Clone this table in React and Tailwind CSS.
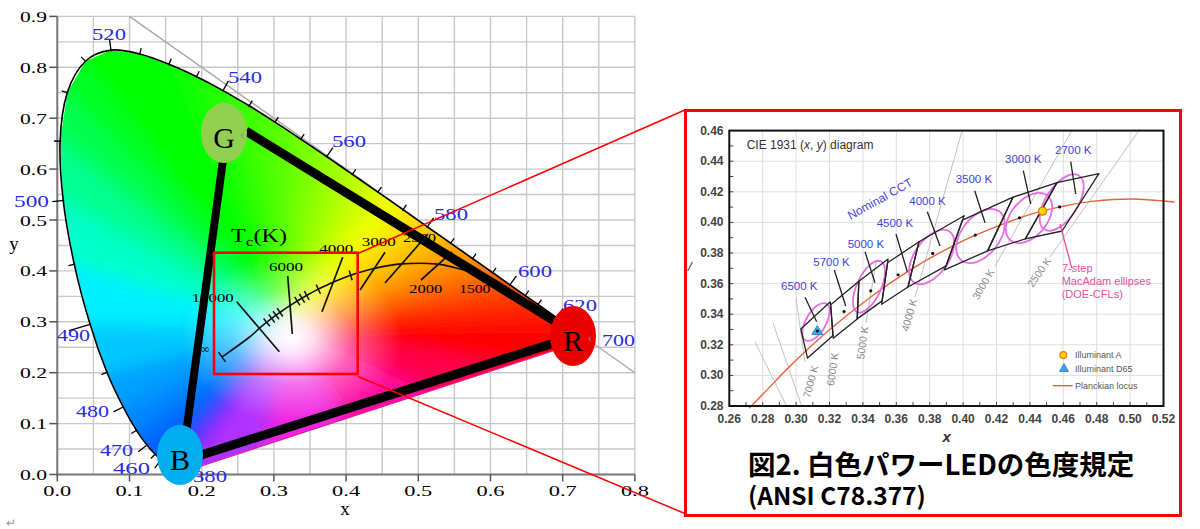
import React from "react";

// ---------- left chart: CIE 1931 xy (source picture is stretched ~1.42x horizontally)
const X = (x) => 57.3 + x * 722;
const Y = (y) => 474.5 - y * 509;

const SERIF = "'Liberation Serif', 'DejaVu Serif', serif";
const SANS = "'Liberation Sans', Arial, sans-serif";
const BLUE = "#2a2ae6";

// x, y, colour, wavelength
const LOCUS = [
  [0.1741, 0.005, "#7a00ff", 380],
  [0.1714, 0.0051, "#6a10ff", 420],
  [0.1644, 0.0109, "#4a30ff", 440],
  [0.1566, 0.0177, "#2a40ff", 450],
  [0.144, 0.0297, "#0a55ff", 460],
  [0.1355, 0.0399, "#0060ff", 465],
  [0.1241, 0.0578, "#0070ff", 470],
  [0.1096, 0.0868, "#0088ff", 475],
  [0.0913, 0.1327, "#00a0ff", 480],
  [0.0687, 0.2007, "#00c8ff", 485],
  [0.0454, 0.295, "#00f0ff", 490],
  [0.0235, 0.4127, "#00ffc8", 495],
  [0.0082, 0.5384, "#00ff90", 500],
  [0.0039, 0.6548, "#00ff50", 505],
  [0.0139, 0.7502, "#00ff20", 510],
  [0.0389, 0.812, "#00ff00", 515],
  [0.0743, 0.8338, "#00ff00", 520],
  [0.1142, 0.8262, "#00ff00", 525],
  [0.1547, 0.8059, "#10ff00", 530],
  [0.1929, 0.7816, "#20ff00", 535],
  [0.2296, 0.7543, "#30ff00", 540],
  [0.2658, 0.7243, "#48ff00", 545],
  [0.3016, 0.6923, "#60ff00", 550],
  [0.3373, 0.6589, "#80ff00", 555],
  [0.3731, 0.6245, "#a0ff00", 560],
  [0.4087, 0.5896, "#c8ff00", 565],
  [0.4441, 0.5547, "#eeff00", 570],
  [0.4788, 0.5202, "#ffe000", 575],
  [0.5125, 0.4866, "#ffc000", 580],
  [0.5448, 0.4544, "#ffa000", 585],
  [0.5752, 0.4242, "#ff8000", 590],
  [0.6029, 0.3965, "#ff6000", 595],
  [0.627, 0.3725, "#ff4800", 600],
  [0.6482, 0.3514, "#ff3000", 605],
  [0.6658, 0.334, "#ff2000", 610],
  [0.6915, 0.3083, "#ff1000", 620],
  [0.7079, 0.292, "#ff0800", 630],
  [0.719, 0.2809, "#ff0000", 640],
  [0.7347, 0.2653, "#ff0000", 700],
];
const LABELED = [460, 470, 480, 490, 500, 520, 540, 560, 580, 600, 620];

const PURPLE = [
  [0.2, "#ff0050"],
  [0.4, "#ff10a0"],
  [0.6, "#f020e0"],
  [0.8, "#b030ff"],
];

const W = [X(0.32), Y(0.29)];
const CORE = [292, 338];

const WAVE_LABELS = [
  ["520", 92, 34.3, 34],
  ["540", 228, 77, 34],
  ["560", 332, 141, 34],
  ["580", 434, 214, 34],
  ["600", 518, 271.7, 34],
  ["620", 563, 305, 34],
  ["700", 602, 340.7, 33],
  ["500", 14, 201.7, 35],
  ["490", 57, 335, 33],
  ["480", 76, 411.7, 33],
  ["470", 100, 450.7, 33],
  ["460", 113, 468.3, 37],
  ["380", 193, 476, 34],
];

const TC_LABELS = [
  ["10000", 191.7, 297.7, 42],
  ["6000", 269, 266.7, 34],
  ["4000", 319.3, 248.3, 34],
  ["3000", 361.7, 241.7, 34],
  ["2500", 403, 237.3, 33],
  ["2000", 409.3, 288.3, 33],
  ["1500", 459.3, 288.3, 31],
];

const ISOTHERMS = [
  [236.7, 301.7, 279.3, 351.7],
  [287.7, 276, 292.3, 334],
  [342.7, 257.3, 322, 311.7],
  [385, 252.3, 360, 290],
  [428, 234, 385, 283],
  [452, 252, 421, 280],
];

const PLANCK_L = [
  [222, 357],
  [X(0.2637), Y(0.2671)],
  [X(0.2807), Y(0.2884)],
  [X(0.2952), Y(0.3048)],
  [X(0.3064), Y(0.3166)],
  [X(0.3221), Y(0.3318)],
  [X(0.3451), Y(0.3516)],
  [X(0.3608), Y(0.3636)],
  [X(0.3805), Y(0.3768)],
  [X(0.4053), Y(0.3907)],
  [X(0.4369), Y(0.4041)],
  [X(0.477), Y(0.4137)],
  [X(0.5267), Y(0.4133)],
  [X(0.564), Y(0.4014)],
  [X(0.5857), Y(0.3931)],
];
const SMALL_TICKS = [266.7, 271.7, 276, 280, 297.3, 302, 306.7, 318.3, 350.7];

const f = (n) => n.toFixed(1);

function smoothPath(pts) {
  let d = `M${f(pts[0][0])},${f(pts[0][1])}`;
  for (let i = 0; i < pts.length - 1; i++) {
    const p0 = pts[i - 1] || pts[i];
    const p1 = pts[i];
    const p2 = pts[i + 1];
    const p3 = pts[i + 2] || p2;
    const c1 = [p1[0] + (p2[0] - p0[0]) / 6, p1[1] + (p2[1] - p0[1]) / 6];
    const c2 = [p2[0] - (p3[0] - p1[0]) / 6, p2[1] - (p3[1] - p1[1]) / 6];
    d += ` C${f(c1[0])},${f(c1[1])} ${f(c2[0])},${f(c2[1])} ${f(p2[0])},${f(p2[1])}`;
  }
  return d;
}

function onCurve(pts, x) {
  for (let i = 0; i < pts.length - 1; i++) {
    const [ax, ay] = pts[i];
    const [bx, by] = pts[i + 1];
    if (x >= ax && x <= bx) {
      const t = (x - ax) / (bx - ax);
      return { p: [x, ay + (by - ay) * t], d: [bx - ax, by - ay] };
    }
  }
  return null;
}

function Stretch({ x, y, w, size, fill = "#000", anchor = "start", children }) {
  return (
    <text
      x={x}
      y={y}
      fontSize={size}
      fill={fill}
      textAnchor={anchor}
      dominantBaseline="central"
      textLength={w}
      lengthAdjust="spacingAndGlyphs"
      fontFamily={SERIF}
    >
      {children}
    </text>
  );
}

function CieChart() {
  const locusPx = LOCUS.map(([x, y, c, nm]) => ({ p: [X(x), Y(y)], c, nm }));
  const a = locusPx[locusPx.length - 1].p;
  const b = locusPx[0].p;
  const purplePx = PURPLE.map(([t, c]) => ({ p: [a[0] + (b[0] - a[0]) * t, a[1] + (b[1] - a[1]) * t], c }));
  const ring = [...locusPx, ...purplePx];
  const ringPts = ring.map((r) => `${f(r.p[0])},${f(r.p[1])}`).join(" ");
  const far = (p) => [W[0] + (p[0] - W[0]) * 1.6, W[1] + (p[1] - W[1]) * 1.6];

  const ticks = [];
  for (let i = 3; i < locusPx.length - 1; i++) {
    const p = locusPx[i].p;
    const t = [locusPx[i + 1].p[0] - locusPx[i - 1].p[0], locusPx[i + 1].p[1] - locusPx[i - 1].p[1]];
    const len = Math.hypot(t[0], t[1]);
    let n = [t[1] / len, -t[0] / len];
    if (n[0] * (p[0] - W[0]) + n[1] * (p[1] - W[1]) < 0) n = [-n[0], -n[1]];
    const nm = locusPx[i].nm;
    const L = nm === 490 ? 22 : LABELED.includes(nm) ? 11 : 6;
    ticks.push([p[0] - n[0], p[1] - n[1], p[0] + n[0] * L, p[1] + n[1] * L]);
  }

  const planckTicks = SMALL_TICKS.map((x) => {
    const r = onCurve(PLANCK_L, x);
    const len = Math.hypot(r.d[0], r.d[1]);
    const n = [-r.d[1] / len, r.d[0] / len];
    return [r.p[0] - n[0] * 5, r.p[1] - n[1] * 5, r.p[0] + n[0] * 5, r.p[1] + n[1] * 5];
  });
  const e0 = PLANCK_L[0];
  const e1 = PLANCK_L[1];
  const el = Math.hypot(e1[0] - e0[0], e1[1] - e0[1]);
  const en = [-(e1[1] - e0[1]) / el, (e1[0] - e0[0]) / el];

  const gridX = [];
  for (let v = 0; v <= 0.8001; v += 0.05) gridX.push(X(v));
  const gridY = [];
  for (let v = 0; v <= 0.9001; v += 0.05) gridY.push(Y(v));

  return (
    <svg width="684" height="529" viewBox="0 0 684 529" className="block shrink-0">
      <defs>
        <clipPath id="locusClip">
          <polygon points={ringPts} />
        </clipPath>
        <filter id="soft" x="-30%" y="-30%" width="160%" height="160%">
          <feGaussianBlur stdDeviation="9" />
        </filter>
        <radialGradient id="whiteCore" cx={CORE[0]} cy={CORE[1]} r="85" gradientUnits="userSpaceOnUse" gradientTransform={`translate(${CORE[0]} ${CORE[1]}) scale(1.3 1) translate(${-CORE[0]} ${-CORE[1]})`}>
          <stop offset="0" stopColor="#ffffff" stopOpacity="1" />
          <stop offset="0.2" stopColor="#ffffff" stopOpacity="0.85" />
          <stop offset="0.55" stopColor="#ffffff" stopOpacity="0.35" />
          <stop offset="1" stopColor="#ffffff" stopOpacity="0" />
        </radialGradient>
      </defs>

      {/* grid */}
      {gridX.map((x, i) => (
        <line key={`gx${i}`} x1={x} y1={Y(0.9)} x2={x} y2={Y(0)} stroke="#c8c8c8" strokeWidth="1.4" />
      ))}
      {gridY.map((y, i) => (
        <line key={`gy${i}`} x1={X(0)} y1={y} x2={X(0.8)} y2={y} stroke="#c8c8c8" strokeWidth="1.4" />
      ))}
      <line x1={X(0)} y1={Y(0.9)} x2={X(0)} y2={Y(0) + 1} stroke="#7a7a7a" strokeWidth="2" />
      <line x1={X(0) - 1} y1={Y(0)} x2={X(0.8)} y2={Y(0)} stroke="#7a7a7a" strokeWidth="2" />
      {[0, 1, 2, 3, 4, 5, 6, 7, 8, 9].map((k) => (
        <line key={`ty${k}`} x1={X(0) - 8} y1={Y(k / 10)} x2={X(0)} y2={Y(k / 10)} stroke="#555" strokeWidth="1.5" />
      ))}
      {[0, 1, 2, 3, 4, 5, 6, 7, 8].map((k) => (
        <line key={`tx${k}`} x1={X(k / 10)} y1={Y(0)} x2={X(k / 10)} y2={Y(0) + 7} stroke="#555" strokeWidth="1.5" />
      ))}
      {[0, 1, 2, 3, 4, 5, 6, 7, 8, 9].map((k) => (
        <Stretch key={`ly${k}`} x={47} y={Y(k / 10)} w={27} size={15.5} anchor="end">
          {(k / 10).toFixed(1)}
        </Stretch>
      ))}
      {[0, 1, 2, 3, 4, 5, 6, 7, 8].map((k) => (
        <Stretch key={`lx${k}`} x={X(k / 10)} y={490} w={28} size={15.5} anchor="middle">
          {(k / 10).toFixed(1)}
        </Stretch>
      ))}
      <text x="14" y="243" fontSize="19" fontFamily={SERIF} textAnchor="middle" dominantBaseline="central">y</text>
      <text x="345" y="508" fontSize="19" fontFamily={SERIF} textAnchor="middle" dominantBaseline="central">x</text>
      <line x1={X(0.1)} y1={Y(0.9)} x2={X(0.8)} y2={Y(0.2)} stroke="#a8a8a8" strokeWidth="1.4" />

      {/* colour fill: blurred hue fan clipped to the locus, white core on top */}
      <polygon points={ringPts} fill="#ffffff" />
      <g clipPath="url(#locusClip)">
        <g filter="url(#soft)">
          {ring.map((pt, i) => {
            const q = ring[(i + 1) % ring.length];
            const p1 = far(pt.p);
            const p2 = far(q.p);
            return (
              <polygon
                key={`tri${i}`}
                points={`${f(W[0])},${f(W[1])} ${f(p1[0])},${f(p1[1])} ${f(p2[0])},${f(p2[1])}`}
                fill={pt.c}
                stroke={pt.c}
                strokeWidth="1"
                strokeLinejoin="round"
              />
            );
          })}
        </g>
        <ellipse cx={CORE[0]} cy={CORE[1]} rx="112" ry="86" fill="url(#whiteCore)" />
      </g>
      <line x1={a[0]} y1={a[1]} x2={b[0]} y2={b[1]} stroke="#e0209a" strokeWidth="1.2" />
      <path d={smoothPath(locusPx.map((l) => l.p))} fill="none" stroke="#000" strokeWidth="1.6" />
      {ticks.map(([x1, y1, x2, y2], i) => (
        <line key={`lt${i}`} x1={x1} y1={y1} x2={x2} y2={y2} stroke="#000" strokeWidth="1.3" />
      ))}

      {WAVE_LABELS.map(([t, x, y, w]) => (
        <Stretch key={t} x={x} y={y} w={w} size={16} fill={BLUE}>
          {t}
        </Stretch>
      ))}

      {/* Planckian locus */}
      <path d={smoothPath(PLANCK_L)} fill="none" stroke="#111" strokeWidth="1.6" />
      {ISOTHERMS.map(([x1, y1, x2, y2], i) => (
        <line key={`iso${i}`} x1={x1} y1={y1} x2={x2} y2={y2} stroke="#111" strokeWidth="1.7" />
      ))}
      {planckTicks.map(([x1, y1, x2, y2], i) => (
        <line key={`pt${i}`} x1={x1} y1={y1} x2={x2} y2={y2} stroke="#111" strokeWidth="1.5" />
      ))}
      <line x1={e0[0] - en[0] * 6} y1={e0[1] - en[1] * 6} x2={e0[0] + en[0] * 6} y2={e0[1] + en[1] * 6} stroke="#111" strokeWidth="1.5" />
      <text x="205" y="349" fontSize="12" fontFamily={SERIF} textAnchor="middle" dominantBaseline="central">∞</text>
      {TC_LABELS.map(([t, x, y, w]) => (
        <Stretch key={t} x={x} y={y} w={w} size={13.5}>
          {t}
        </Stretch>
      ))}
      <text x="231" y="242" fontSize="18" fontFamily={SERIF} textLength="56" lengthAdjust="spacingAndGlyphs">
        T<tspan fontSize="13" dy="4">c</tspan>
        <tspan dy="-4">(K)</tspan>
      </text>

      {/* gamut triangle */}
      <line x1="246" y1="131" x2="556" y2="322" stroke="#000" strokeWidth="9" />
      <line x1="198" y1="456" x2="554" y2="343" stroke="#000" strokeWidth="9" />
      <line x1="223" y1="160" x2="186.5" y2="430" stroke="#000" strokeWidth="8" />

      {/* zoom box and connectors */}
      <rect x="214" y="252.7" width="143.7" height="121.3" fill="none" stroke="#ff0000" strokeWidth="2.6" />
      <line x1="358" y1="253.5" x2="686" y2="109.5" stroke="#ff0000" strokeWidth="1.5" />
      <line x1="358" y1="376.5" x2="686" y2="514" stroke="#ff0000" strokeWidth="1.5" />

      {/* primaries */}
      <ellipse cx="224" cy="133" rx="23" ry="30" fill="#92d050" />
      <text x="224" y="148" fontSize="30" fontFamily={SERIF} textAnchor="middle">G</text>
      <text x="242" y="139" fontSize="11" fontFamily={SANS} fill="#888" textAnchor="middle">‹</text>
      <ellipse cx="180" cy="455" rx="23" ry="30" fill="#00aeef" />
      <text x="180" y="470" fontSize="30" fontFamily={SERIF} textAnchor="middle">B</text>
      <text x="197" y="461" fontSize="11" fontFamily={SANS} fill="#888" textAnchor="middle">‹</text>
      <ellipse cx="573" cy="336" rx="23" ry="30" fill="#ea0000" />
      <text x="573" y="351" fontSize="30" fontFamily={SERIF} textAnchor="middle">R</text>
      <text x="590" y="342" fontSize="11" fontFamily={SANS} fill="#999" textAnchor="middle">‹</text>

      <text x="6" y="527" fontSize="12" fontFamily={SANS} fill="#999">↵</text>
    </svg>
  );
}

// ---------- right chart: ANSI C78.377 quadrangles
const RX = (x) => 729.3 + ((x - 0.26) / 0.02) * 33.4;
const RY = (y) => 406 - ((y - 0.28) / 0.02) * 30.6;

const QUADS = [
  [[0.3205, 0.3481], [0.3028, 0.3304], [0.3068, 0.3113], [0.3221, 0.3261]],
  [[0.3376, 0.3616], [0.3207, 0.3462], [0.3222, 0.3243], [0.3366, 0.3369]],
  [[0.3551, 0.376], [0.3376, 0.3616], [0.3366, 0.3369], [0.3515, 0.3487]],
  [[0.3736, 0.3874], [0.3548, 0.3736], [0.3512, 0.3465], [0.367, 0.3578]],
  [[0.4006, 0.4044], [0.3736, 0.3874], [0.367, 0.3578], [0.3898, 0.3716]],
  [[0.4299, 0.4165], [0.3996, 0.4015], [0.3889, 0.369], [0.4147, 0.3814]],
  [[0.4562, 0.426], [0.4299, 0.4165], [0.4147, 0.3814], [0.4373, 0.3893]],
  [[0.4813, 0.4319], [0.4562, 0.426], [0.4373, 0.3893], [0.4593, 0.3944]],
];
const CENTERS = [
  [0.3123, 0.3282],
  [0.3287, 0.3417],
  [0.3447, 0.3553],
  [0.3611, 0.3658],
  [0.3818, 0.3797],
  [0.4073, 0.3917],
  [0.4338, 0.403],
  [0.4578, 0.4101],
];

// label, label x, label y, tick line
const NOMINAL = [
  ["6500 K", 781, 285.7, [805, 297.3, 816.7, 321.7]],
  ["5700 K", 813.3, 262.3, [834.3, 270, 845.7, 306]],
  ["5000 K", 847.7, 244, [865, 251.7, 875, 282.7]],
  ["4500 K", 876.7, 222.7, [896, 234, 907.3, 271.7]],
  ["4000 K", 909.3, 200.7, [927.3, 211.7, 940, 246]],
  ["3500 K", 955.7, 179.3, [974.7, 190.7, 985, 222.7]],
  ["3000 K", 1005, 159.3, [1023.3, 170.7, 1030.7, 204]],
  ["2700 K", 1055, 150, [1070.7, 161.7, 1075.7, 194]],
];

// cx, cy, a, b, angle
const MACADAM = [
  [816, 322, 21, 10, 60],
  [869, 286.7, 28, 12, 65],
  [931.7, 257, 31, 17, 55],
  [980.5, 236, 31, 19, 52],
  [1029, 218, 29, 18, 50],
  [1061.7, 202.5, 32, 16, 57],
];

const GRAY_LINES = [
  [755, 342, 787, 407],
  [773, 323, 802, 407],
  [796, 298, 805, 362],
  [866, 323, 876, 262],
  [915, 297, 962, 131],
  [995, 266, 1072, 130],
  [1050, 257, 1140, 129],
];
const GRAY_LABELS = [
  ["7000 K", 810.5, 381.5, -75],
  ["6000 K", 832.3, 369.3, -82],
  ["5000 K", 862.3, 342.7, -82],
  ["4000 K", 909, 315, -74],
  ["3000 K", 983, 284, -60],
  ["2500 K", 1039, 272, -55],
];

const PLANCK_R = [
  [0.2719, 0.2785],
  [0.2807, 0.2884],
  [0.2952, 0.3048],
  [0.3064, 0.3166],
  [0.3221, 0.3318],
  [0.3451, 0.3516],
  [0.3608, 0.3636],
  [0.3805, 0.3768],
  [0.4053, 0.3907],
  [0.4369, 0.4041],
  [0.4599, 0.4106],
  [0.477, 0.4137],
  [0.5018, 0.4153],
  [0.5267, 0.4133],
];

const NOM_BLUE = "#4343df";
const PINK = "#e4509c";
const MAGENTA = "#e56ee6";
const PLANCK_RED = "#e8603c";

function AnsiChart() {
  const xs = [];
  for (let i = 0; i <= 13; i++) xs.push(0.26 + i * 0.02);
  const ys = [];
  for (let i = 0; i <= 9; i++) ys.push(0.28 + i * 0.02);
  const minorX = [];
  for (let i = 1; i < 26; i++) minorX.push(RX(0.26 + i * 0.01));
  const minorY = [];
  for (let i = 1; i < 18; i++) minorY.push(RY(0.28 + i * 0.01));

  return (
    <svg width="492" height="336" viewBox="687 112 492 336" className="block">
      {/* grid */}
      {xs.slice(1, -1).map((v) => (
        <line key={`vx${v}`} x1={RX(v)} y1={RY(0.46)} x2={RX(v)} y2={RY(0.28)} stroke="#dedede" strokeWidth="1" />
      ))}
      {ys.slice(1, -1).map((v) => (
        <line key={`hy${v}`} x1={RX(0.26)} y1={RY(v)} x2={RX(0.52)} y2={RY(v)} stroke="#dedede" strokeWidth="1" />
      ))}
      {minorX.map((x, i) => (
        <line key={`mx${i}`} x1={x} y1={RY(0.28)} x2={x} y2={RY(0.28) - 4} stroke="#444" strokeWidth="1" />
      ))}
      {minorY.map((y, i) => (
        <line key={`my${i}`} x1={RX(0.26)} y1={y} x2={RX(0.26) + 4} y2={y} stroke="#444" strokeWidth="1" />
      ))}

      {/* gray isotherms */}
      {GRAY_LINES.map(([x1, y1, x2, y2], i) => (
        <line key={`gl${i}`} x1={x1} y1={y1} x2={x2} y2={y2} stroke="#c2c2c2" strokeWidth="1" />
      ))}
      {GRAY_LABELS.map(([t, x, y, r]) => (
        <text
          key={t}
          x={x}
          y={y}
          fontSize="10.5"
          fontFamily={SANS}
          fill="#8a8a8a"
          textAnchor="middle"
          dominantBaseline="central"
          transform={`rotate(${r} ${x} ${y})`}
        >
          {t}
        </text>
      ))}

      {/* Planckian locus */}
      <path d={smoothPath(PLANCK_R.map(([x, y]) => [RX(x), RY(y)]))} fill="none" stroke={PLANCK_RED} strokeWidth="1.4" />

      {/* MacAdam ellipses */}
      {MACADAM.map(([cx, cy, ea, eb, ang], i) => (
        <ellipse
          key={`ma${i}`}
          cx={cx}
          cy={cy}
          rx={ea}
          ry={eb}
          fill="none"
          stroke={MAGENTA}
          strokeWidth="1.8"
          transform={`rotate(${-ang} ${cx} ${cy})`}
        />
      ))}

      {/* quadrangles */}
      {QUADS.map((q, i) => (
        <polygon
          key={`q${i}`}
          points={q.map(([x, y]) => `${f(RX(x))},${f(RY(y))}`).join(" ")}
          fill="none"
          stroke="#222"
          strokeWidth="1.3"
          strokeLinejoin="round"
        />
      ))}
      {CENTERS.map(([x, y], i) => (
        <circle key={`c${i}`} cx={RX(x)} cy={RY(y)} r="1.6" fill="#111" />
      ))}

      {/* nominal CCT */}
      {NOMINAL.map(([t, x, y, [x1, y1, x2, y2]]) => (
        <g key={t}>
          <line x1={x1} y1={y1} x2={x2} y2={y2} stroke="#222" strokeWidth="1.3" />
          <text x={x} y={y} fontSize="11.5" fontFamily={SANS} fill={NOM_BLUE} dominantBaseline="central">
            {t}
          </text>
        </g>
      ))}
      <text x="880" y="199" fontSize="12" fontFamily={SANS} fill={NOM_BLUE} textAnchor="middle" dominantBaseline="central" transform="rotate(-29 880 199)">
        Nominal CCT
      </text>

      {/* illuminants */}
      <circle cx={RX(0.4476)} cy={RY(0.4074)} r="4" fill="#ffd700" stroke="#f07800" strokeWidth="1.4" />
      <polygon points={`${f(RX(0.3127))},${f(RY(0.329) - 5.5)} ${f(RX(0.3127) - 5.5)},${f(RY(0.329) + 3.5)} ${f(RX(0.3127) + 5.5)},${f(RY(0.329) + 3.5)}`} fill="#3fa4ec" stroke="#1c7cc4" strokeWidth="0.8" />
      <circle cx={RX(0.3127)} cy={RY(0.329)} r="1.5" fill="#111" />

      {/* pink annotation */}
      <line x1="1071.7" y1="268" x2="1060" y2="224" stroke={PINK} strokeWidth="1.3" />
      <text fontSize="11" fontFamily={SANS} fill={PINK}>
        <tspan x="1062" y="271.5">7-step</tspan>
        <tspan x="1061.7" y="284.5">MacAdam ellipses</tspan>
        <tspan x="1061.7" y="297.5">(DOE-CFLs)</tspan>
      </text>

      {/* legend */}
      <circle cx="1063.3" cy="355" r="3.4" fill="#ffd700" stroke="#f07800" strokeWidth="1.2" />
      <text x="1075" y="355" fontSize="9" fontFamily={SANS} fill="#555" dominantBaseline="central">Illuminant A</text>
      <polygon points="1064,363.5 1059.5,371.5 1068.5,371.5" fill="#3fa4ec" stroke="#1c7cc4" strokeWidth="0.8" />
      <text x="1075" y="368.5" fontSize="9" fontFamily={SANS} fill="#555" dominantBaseline="central">Illuminant D65</text>
      <line x1="1052.7" y1="385.7" x2="1072.7" y2="385.7" stroke={PLANCK_RED} strokeWidth="1.4" />
      <text x="1075" y="385.7" fontSize="9" fontFamily={SANS} fill="#555" dominantBaseline="central">Planckian locus</text>

      {/* frame, title and axes */}
      <rect x={RX(0.26)} y={RY(0.46)} width={RX(0.52) - RX(0.26)} height={RY(0.28) - RY(0.46)} fill="none" stroke="#111" strokeWidth="2" />
      <text x="746.7" y="145" fontSize="12" fontFamily={SANS} fill="#333" dominantBaseline="central">
        CIE 1931 (<tspan fontStyle="italic">x</tspan>, <tspan fontStyle="italic">y</tspan>) diagram
      </text>
      {ys.map((v) => (
        <text key={`yl${v}`} x="723.5" y={RY(v)} fontSize="12" fontWeight="bold" fontFamily={SANS} fill="#444" textAnchor="end" dominantBaseline="central">
          {v.toFixed(2)}
        </text>
      ))}
      {xs.map((v) => (
        <text key={`xl${v}`} x={RX(v)} y="418.5" fontSize="12" fontWeight="bold" fontFamily={SANS} fill="#444" textAnchor="middle" dominantBaseline="central">
          {v.toFixed(2)}
        </text>
      ))}
      <text x="946.7" y="436.5" fontSize="15" fontStyle="italic" fontWeight="bold" fontFamily={SANS} fill="#333" textAnchor="middle" dominantBaseline="central">
        x
      </text>
      <text x="688" y="266" fontSize="13" fontStyle="italic" fontFamily={SANS} fill="#333" dominantBaseline="central">
        /
      </text>
    </svg>
  );
}

export default function App() {
  return (
    <div className="flex w-[1200px] h-[529px] overflow-hidden bg-white">
      <CieChart />
      <div className="mt-[109px] h-[408px] w-[498px] shrink-0 overflow-hidden border-[3px] border-[#ff0000] bg-white">
        <AnsiChart />
        <div className="pl-[61px] font-bold text-black font-['Noto_Sans_CJK_JP','Noto_Sans',sans-serif]">
          <p className="text-[27.5px] leading-[30px]">図2. 白色パワーLEDの色度規定</p>
          <p className="text-[24.5px] leading-[34px]">(ANSI C78.377)</p>
        </div>
      </div>
    </div>
  );
}
